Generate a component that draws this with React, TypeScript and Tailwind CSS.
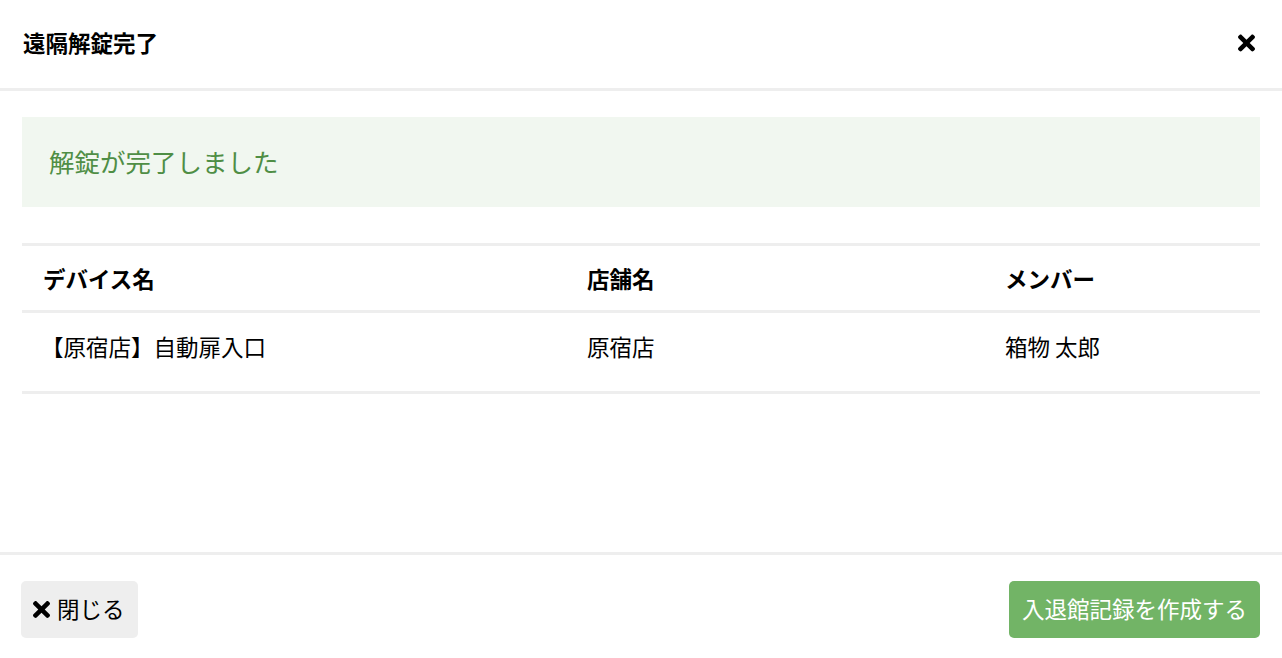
import { FaTimes } from "react-icons/fa";

interface Row {
  id: string;
  device: string;
  store: string;
  member: string;
}

const rows: Row[] = [
  { id: "1", device: "【原宿店】自動扉入口", store: "原宿店", member: "箱物 太郎" },
];

const font = "font-['Noto_Sans_CJK_JP','Noto_Sans',sans-serif]";

export default function App() {
  return (
    <div className={`flex h-[658px] w-full flex-col bg-white text-black ${font}`}>
      {/* header */}
      <div className="flex h-[91px] shrink-0 items-center justify-between border-b-[3px] border-[#eeeeee] pl-[23px] pr-[27px]">
        <h1 className="mb-[3px] text-[22.5px] font-bold leading-none">遠隔解錠完了</h1>
        <button className="mb-[2px] flex items-center text-black">
          <FaTimes className="h-[26px] w-[17px]" />
        </button>
      </div>

      {/* body */}
      <div className="flex-1 px-[22px] pt-[26px]">
        <div className="flex h-[90px] items-center bg-[#f1f7f0] pb-[2px] pl-[27px] text-[25.5px] text-[#4f8e45]">
          解錠が完了しました
        </div>

        <div className="mt-[36px] border-t-[3px] border-[#eeeeee]">
          <div className="grid grid-cols-[545px_418px_1fr] border-b-[3px] border-[#eeeeee] text-[22.5px] font-bold leading-[34px]">
            <div className="pb-[15px] pl-[21px] pt-[15px]">デバイス名</div>
            <div className="pb-[15px] pl-[20px] pt-[15px]">店舗名</div>
            <div className="pb-[15px] pl-[20px] pt-[15px]">メンバー</div>
          </div>
          {rows.map((r) => (
            <div
              key={r.id}
              className="grid grid-cols-[545px_418px_1fr] border-b-[3px] border-[#eeeeee] text-[22.5px] leading-[34px]"
            >
              <div className="pb-[28px] pl-[19px] pt-[16px]">{r.device}</div>
              <div className="pb-[28px] pl-[20px] pt-[16px]">{r.store}</div>
              <div className="pb-[28px] pl-[20px] pt-[16px]">{r.member}</div>
            </div>
          ))}
        </div>
      </div>

      {/* footer */}
      <div className="flex h-[106px] shrink-0 items-start justify-between border-t-[3px] border-[#eeeeee] pl-[21px] pr-[22px] pt-[26px]">
        <button className="flex h-[57px] w-[117px] items-center gap-[7px] rounded-[5px] bg-[#eeeeee] pb-[1px] pl-[12px] text-[22.5px] text-black">
          <FaTimes className="h-[25px] w-[17px]" />
          <span>閉じる</span>
        </button>
        <button className="flex h-[57px] w-[251px] items-center justify-center rounded-[5px] bg-[#72b466] pb-[1px] text-[22.5px] text-white">
          入退館記録を作成する
        </button>
      </div>
    </div>
  );
}
